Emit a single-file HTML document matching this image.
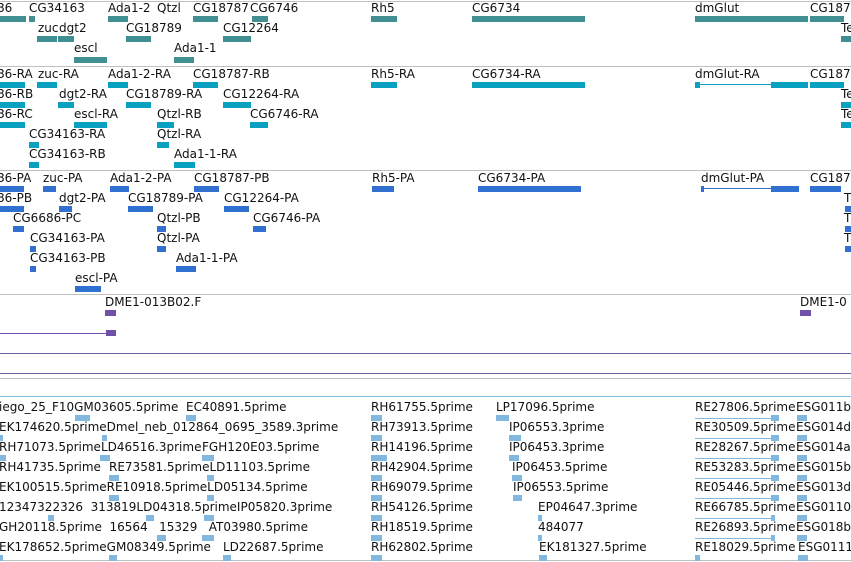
<!DOCTYPE html>
<html><head><meta charset="utf-8"><style>
html,body{margin:0;padding:0;background:#fff;}
body{width:851px;height:562px;position:relative;overflow:hidden;font-family:"DejaVu Sans","Liberation Sans",sans-serif;font-size:12px;color:#111;}
.t{position:absolute;white-space:nowrap;line-height:14px;}
.b{position:absolute;height:6px;}
.h{position:absolute;height:1px;left:0;width:851px;}
.a{background:#3f8f93}.c{background:#0aa0c0}.d{background:#3070d0}.p{background:#7050a8}.l{background:#80b8e0}
</style></head><body>
<div class="h" style="top:1px;background:#c0c0c0"></div>
<div class="h" style="top:66px;background:#c0c0c0"></div>
<div class="h" style="top:170px;background:#c0c0c0"></div>
<div class="h" style="top:294px;background:#c0c0c0"></div>
<div class="h" style="top:353px;background:#7060a0"></div>
<div class="h" style="top:373px;background:#7060a0"></div>
<div class="h" style="top:378px;background:#c0c0c0"></div>
<div class="h" style="top:396px;background:#8abddd"></div>
<div class="h" style="top:560px;background:#c0c0c0"></div>

<!-- track 1 -->
<div class="t" style="left:-3px;top:1px">86</div><div class="b a" style="left:0;top:16px;width:26px"></div>
<div class="t" style="left:29px;top:1px">CG34163</div><div class="b a" style="left:29px;top:16px;width:6px"></div>
<div class="t" style="left:108px;top:1px">Ada1-2</div><div class="b a" style="left:108px;top:16px;width:20px"></div>
<div class="t" style="left:157px;top:1px">Qtzl</div>
<div class="t" style="left:193px;top:1px">CG18787</div><div class="b a" style="left:193px;top:16px;width:25px"></div>
<div class="t" style="left:250px;top:1px">CG6746</div><div class="b a" style="left:252px;top:16px;width:16px"></div>
<div class="t" style="left:371px;top:1px">Rh5</div><div class="b a" style="left:371px;top:16px;width:26px"></div>
<div class="t" style="left:472px;top:1px">CG6734</div><div class="b a" style="left:472px;top:16px;width:113px"></div>
<div class="t" style="left:695px;top:1px">dmGlut</div><div class="b a" style="left:695px;top:16px;width:113px"></div>
<div class="t" style="left:810px;top:1px">CG187</div><div class="b a" style="left:810px;top:16px;width:34px"></div>
<div class="t" style="left:38px;top:21px">zuc</div><div class="b a" style="left:37px;top:36px;width:20px"></div>
<div class="t" style="left:59px;top:21px">dgt2</div><div class="b a" style="left:58px;top:36px;width:16px"></div>
<div class="t" style="left:126px;top:21px">CG18789</div><div class="b a" style="left:126px;top:36px;width:25px"></div>
<div class="t" style="left:223px;top:21px">CG12264</div><div class="b a" style="left:223px;top:36px;width:28px"></div>
<div class="t" style="left:841px;top:21px">Te</div><div class="b a" style="left:841px;top:36px;width:10px"></div>
<div class="t" style="left:74px;top:41px">escl</div><div class="b a" style="left:74px;top:57px;width:33px"></div>
<div class="t" style="left:174px;top:41px">Ada1-1</div><div class="b a" style="left:174px;top:57px;width:20px"></div>

<!-- track 2 -->
<div class="t" style="left:-3px;top:67px">86-RA</div><div class="b c" style="left:0;top:82px;width:25px"></div>
<div class="t" style="left:38px;top:67px">zuc-RA</div><div class="b c" style="left:37px;top:82px;width:20px"></div>
<div class="t" style="left:108px;top:67px">Ada1-2-RA</div><div class="b c" style="left:108px;top:82px;width:20px"></div>
<div class="t" style="left:193px;top:67px">CG18787-RB</div><div class="b c" style="left:193px;top:82px;width:25px"></div>
<div class="t" style="left:371px;top:67px">Rh5-RA</div><div class="b c" style="left:371px;top:82px;width:26px"></div>
<div class="t" style="left:472px;top:67px">CG6734-RA</div><div class="b c" style="left:472px;top:82px;width:113px"></div>
<div class="t" style="left:695px;top:67px">dmGlut-RA</div><div class="b c" style="left:695px;top:82px;width:5px"></div><div class="c" style="position:absolute;left:695px;top:84px;width:80px;height:1px"></div><div class="b c" style="left:771px;top:82px;width:37px"></div>
<div class="t" style="left:810px;top:67px">CG187</div><div class="b c" style="left:810px;top:82px;width:34px"></div>
<div class="t" style="left:-3px;top:87px">86-RB</div><div class="b c" style="left:0;top:102px;width:25px"></div>
<div class="t" style="left:59px;top:87px">dgt2-RA</div><div class="b c" style="left:58px;top:102px;width:16px"></div>
<div class="t" style="left:126px;top:87px">CG18789-RA</div><div class="b c" style="left:126px;top:102px;width:25px"></div>
<div class="t" style="left:223px;top:87px">CG12264-RA</div><div class="b c" style="left:223px;top:102px;width:28px"></div>
<div class="t" style="left:841px;top:87px">Te</div><div class="b c" style="left:841px;top:102px;width:10px"></div>
<div class="t" style="left:-3px;top:107px">86-RC</div><div class="b c" style="left:0;top:122px;width:25px"></div>
<div class="t" style="left:74px;top:107px">escl-RA</div><div class="b c" style="left:74px;top:122px;width:33px"></div>
<div class="t" style="left:157px;top:107px">Qtzl-RB</div><div class="b c" style="left:157px;top:122px;width:17px"></div>
<div class="t" style="left:250px;top:107px">CG6746-RA</div><div class="b c" style="left:250px;top:122px;width:18px"></div>
<div class="t" style="left:841px;top:107px">Te</div><div class="b c" style="left:841px;top:122px;width:10px"></div>
<div class="t" style="left:29px;top:127px">CG34163-RA</div><div class="b c" style="left:29px;top:142px;width:10px"></div>
<div class="t" style="left:157px;top:127px">Qtzl-RA</div><div class="b c" style="left:157px;top:142px;width:12px"></div>
<div class="t" style="left:29px;top:147px">CG34163-RB</div><div class="b c" style="left:29px;top:162px;width:10px"></div>
<div class="t" style="left:174px;top:147px">Ada1-1-RA</div><div class="b c" style="left:174px;top:162px;width:21px"></div>

<!-- track 3 -->
<div class="t" style="left:-3px;top:171px">86-PA</div><div class="b d" style="left:0;top:186px;width:24px"></div>
<div class="t" style="left:43px;top:171px">zuc-PA</div><div class="b d" style="left:43px;top:186px;width:13px"></div>
<div class="t" style="left:110px;top:171px">Ada1-2-PA</div><div class="b d" style="left:110px;top:186px;width:19px"></div>
<div class="t" style="left:194px;top:171px">CG18787-PB</div><div class="b d" style="left:194px;top:186px;width:25px"></div>
<div class="t" style="left:372px;top:171px">Rh5-PA</div><div class="b d" style="left:372px;top:186px;width:22px"></div>
<div class="t" style="left:478px;top:171px">CG6734-PA</div><div class="b d" style="left:478px;top:186px;width:103px"></div>
<div class="t" style="left:701px;top:171px">dmGlut-PA</div><div class="b d" style="left:701px;top:186px;width:3px"></div><div class="d" style="position:absolute;left:701px;top:188px;width:80px;height:1px"></div><div class="b d" style="left:771px;top:186px;width:28px"></div>
<div class="t" style="left:810px;top:171px">CG187</div><div class="b d" style="left:810px;top:186px;width:31px"></div>
<div class="t" style="left:-3px;top:191px">86-PB</div><div class="b d" style="left:0;top:206px;width:24px"></div>
<div class="t" style="left:59px;top:191px">dgt2-PA</div><div class="b d" style="left:59px;top:206px;width:13px"></div>
<div class="t" style="left:128px;top:191px">CG18789-PA</div><div class="b d" style="left:128px;top:206px;width:25px"></div>
<div class="t" style="left:224px;top:191px">CG12264-PA</div><div class="b d" style="left:224px;top:206px;width:25px"></div>
<div class="t" style="left:844px;top:191px">T</div><div class="b d" style="left:845px;top:206px;width:6px"></div>
<div class="t" style="left:13px;top:211px">CG6686-PC</div><div class="b d" style="left:13px;top:226px;width:11px"></div>
<div class="t" style="left:157px;top:211px">Qtzl-PB</div><div class="b d" style="left:157px;top:226px;width:9px"></div>
<div class="t" style="left:253px;top:211px">CG6746-PA</div><div class="b d" style="left:253px;top:226px;width:13px"></div>
<div class="t" style="left:844px;top:211px">T</div><div class="b d" style="left:845px;top:226px;width:6px"></div>
<div class="t" style="left:30px;top:231px">CG34163-PA</div><div class="b d" style="left:30px;top:246px;width:6px"></div>
<div class="t" style="left:157px;top:231px">Qtzl-PA</div><div class="b d" style="left:157px;top:246px;width:9px"></div>
<div class="t" style="left:844px;top:231px">T</div><div class="b d" style="left:845px;top:246px;width:6px"></div>
<div class="t" style="left:30px;top:251px">CG34163-PB</div><div class="b d" style="left:30px;top:266px;width:6px"></div>
<div class="t" style="left:176px;top:251px">Ada1-1-PA</div><div class="b d" style="left:176px;top:266px;width:20px"></div>
<div class="t" style="left:75px;top:271px">escl-PA</div><div class="b d" style="left:75px;top:286px;width:26px"></div>

<!-- track 4 -->
<div class="t" style="left:105px;top:295px">DME1-013B02.F</div><div class="b p" style="left:105px;top:310px;width:11px"></div>
<div class="p" style="position:absolute;left:0;top:333px;width:110px;height:1px"></div><div class="b p" style="left:106px;top:330px;width:10px"></div>
<div class="t" style="left:800px;top:295px">DME1-0</div><div class="b p" style="left:800px;top:310px;width:11px"></div>

<!-- track 5 -->
<div class="t" style="left:-1px;top:400px">iego_25_F10GM03605.5prime</div><div class="b l" style="left:75px;top:415px;width:15px"></div>
<div class="t" style="left:186px;top:400px">EC40891.5prime</div><div class="b l" style="left:186px;top:415px;width:10px"></div>
<div class="t" style="left:371px;top:400px">RH61755.5prime</div><div class="b l" style="left:371px;top:415px;width:11px"></div>
<div class="t" style="left:496px;top:400px">LP17096.5prime</div><div class="b l" style="left:496px;top:415px;width:13px"></div>
<div class="t" style="left:695px;top:400px">RE27806.5prime</div><div class="l" style="position:absolute;left:695px;top:418px;width:80px;height:1px"></div><div class="b l" style="left:771px;top:415px;width:8px"></div>
<div class="t" style="left:796px;top:400px">ESG011b</div><div class="b l" style="left:797px;top:415px;width:10px"></div>

<div class="t" style="left:-1px;top:420px">EK174620.5primeDmel_neb_012864_0695_3589.3prime</div><div class="b l" style="left:0;top:435px;width:3px"></div><div class="b l" style="left:102px;top:435px;width:5px"></div>
<div class="t" style="left:371px;top:420px">RH73913.5prime</div><div class="b l" style="left:371px;top:435px;width:11px"></div>
<div class="t" style="left:509px;top:420px">IP06553.3prime</div><div class="b l" style="left:509px;top:435px;width:12px"></div>
<div class="t" style="left:695px;top:420px">RE30509.5prime</div><div class="l" style="position:absolute;left:695px;top:438px;width:80px;height:1px"></div><div class="b l" style="left:771px;top:435px;width:8px"></div>
<div class="t" style="left:796px;top:420px">ESG014d</div><div class="b l" style="left:797px;top:435px;width:10px"></div>

<div class="t" style="left:-1px;top:440px">RH71073.5primeLD46516.3prime</div><div class="b l" style="left:0;top:455px;width:6px"></div><div class="b l" style="left:100px;top:455px;width:10px"></div>
<div class="t" style="left:202px;top:440px">FGH120E03.5prime</div><div class="b l" style="left:202px;top:455px;width:12px"></div>
<div class="t" style="left:371px;top:440px">RH14196.5prime</div><div class="b l" style="left:371px;top:455px;width:16px"></div>
<div class="t" style="left:509px;top:440px">IP06453.3prime</div><div class="b l" style="left:509px;top:455px;width:10px"></div>
<div class="t" style="left:695px;top:440px">RE28267.5prime</div><div class="l" style="position:absolute;left:695px;top:458px;width:80px;height:1px"></div><div class="b l" style="left:771px;top:455px;width:8px"></div>
<div class="t" style="left:796px;top:440px">ESG014a.</div><div class="b l" style="left:797px;top:455px;width:10px"></div>

<div class="t" style="left:-1px;top:460px">RH41735.5prime</div>
<div class="t" style="left:109px;top:460px">RE73581.5primeLD11103.5prime</div><div class="b l" style="left:109px;top:475px;width:10px"></div><div class="b l" style="left:207px;top:475px;width:7px"></div>
<div class="t" style="left:371px;top:460px">RH42904.5prime</div><div class="b l" style="left:371px;top:475px;width:11px"></div>
<div class="t" style="left:512px;top:460px">IP06453.5prime</div><div class="b l" style="left:512px;top:475px;width:10px"></div>
<div class="t" style="left:695px;top:460px">RE53283.5prime</div><div class="l" style="position:absolute;left:695px;top:478px;width:80px;height:1px"></div><div class="b l" style="left:771px;top:475px;width:8px"></div>
<div class="t" style="left:796px;top:460px">ESG015b</div><div class="b l" style="left:797px;top:475px;width:10px"></div>

<div class="t" style="left:-1px;top:480px">EK100515.5primeRE10918.5primeLD05134.5prime</div><div class="b l" style="left:109px;top:495px;width:10px"></div><div class="b l" style="left:207px;top:495px;width:7px"></div>
<div class="t" style="left:371px;top:480px">RH69079.5prime</div><div class="b l" style="left:371px;top:495px;width:11px"></div>
<div class="t" style="left:513px;top:480px">IP06553.5prime</div><div class="b l" style="left:513px;top:495px;width:9px"></div>
<div class="t" style="left:695px;top:480px">RE05446.5prime</div><div class="l" style="position:absolute;left:695px;top:498px;width:80px;height:1px"></div><div class="b l" style="left:771px;top:495px;width:8px"></div>
<div class="t" style="left:796px;top:480px">ESG013d</div><div class="b l" style="left:797px;top:495px;width:10px"></div>

<div class="t" style="left:-1px;top:500px">12347322326&nbsp; 313819LD04318.5primeIP05820.3prime</div><div class="b l" style="left:48px;top:515px;width:6px"></div><div class="b l" style="left:146px;top:515px;width:8px"></div><div class="b l" style="left:204px;top:515px;width:10px"></div>
<div class="t" style="left:371px;top:500px">RH54126.5prime</div><div class="b l" style="left:371px;top:515px;width:11px"></div>
<div class="t" style="left:538px;top:500px">EP04647.3prime</div><div class="b l" style="left:538px;top:515px;width:4px"></div>
<div class="t" style="left:695px;top:500px">RE66785.5prime</div><div class="l" style="position:absolute;left:695px;top:518px;width:80px;height:1px"></div><div class="b l" style="left:771px;top:515px;width:4px"></div>
<div class="t" style="left:796px;top:500px">ESG0110</div><div class="b l" style="left:797px;top:515px;width:10px"></div>

<div class="t" style="left:-1px;top:520px">GH20118.5prime&nbsp; 16564&nbsp;&nbsp; 15329&nbsp;&nbsp; AT03980.5prime</div><div class="b l" style="left:157px;top:535px;width:9px"></div><div class="b l" style="left:202px;top:535px;width:12px"></div>
<div class="t" style="left:371px;top:520px">RH18519.5prime</div><div class="b l" style="left:371px;top:535px;width:11px"></div>
<div class="t" style="left:538px;top:520px">484077</div><div class="b l" style="left:538px;top:535px;width:4px"></div>
<div class="t" style="left:695px;top:520px">RE26893.5prime</div><div class="l" style="position:absolute;left:695px;top:538px;width:80px;height:1px"></div><div class="b l" style="left:771px;top:535px;width:4px"></div>
<div class="t" style="left:796px;top:520px">ESG018b</div><div class="b l" style="left:797px;top:535px;width:10px"></div>

<div class="t" style="left:-1px;top:540px">EK178652.5primeGM08349.5prime</div><div class="b l" style="left:0;top:555px;width:3px"></div><div class="b l" style="left:109px;top:555px;width:8px"></div>
<div class="t" style="left:223px;top:540px">LD22687.5prime</div><div class="b l" style="left:223px;top:555px;width:8px"></div>
<div class="t" style="left:371px;top:540px">RH62802.5prime</div><div class="b l" style="left:371px;top:555px;width:11px"></div>
<div class="t" style="left:539px;top:540px">EK181327.5prime</div><div class="b l" style="left:539px;top:555px;width:8px"></div>
<div class="t" style="left:695px;top:540px">RE18029.5prime</div><div class="b l" style="left:695px;top:555px;width:5px"></div>
<div class="t" style="left:798px;top:540px">ESG0111</div><div class="b l" style="left:798px;top:555px;width:10px"></div>
</body></html>
